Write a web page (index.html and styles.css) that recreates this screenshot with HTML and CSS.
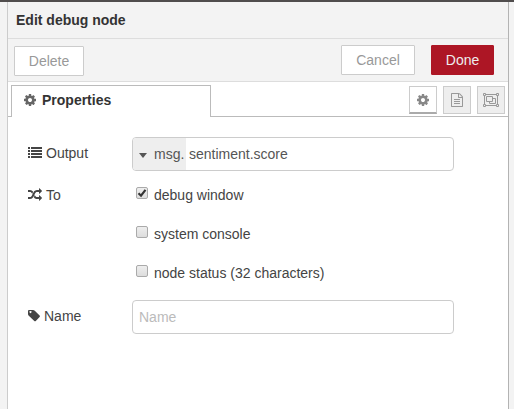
FILE: index.html
```html
<!DOCTYPE html>
<html lang="en">
<head>
<meta charset="utf-8">
<title>Edit debug node</title>
<link rel="stylesheet" href="styles.css">
</head>
<body>
<svg class="defs" aria-hidden="true">
  <symbol id="cog" viewBox="0 0 1792 1792"><path d="M1152 896q0-106-75-181t-181-75-181 75-75 181 75 181 181 75 181-75 75-181zm512-109v222q0 12-8 23t-20 13l-185 28q-19 54-39 91 35 50 107 138 10 12 10 25t-9 23q-27 37-99 108t-94 71q-12 0-26-9l-138-108q-44 23-91 38-16 136-29 186-7 28-36 28h-222q-14 0-24.500-8.500t-11.500-21.500l-28-184q-49-16-90-37l-141 107q-10 9-25 9-14 0-25-11-126-114-165-168-7-10-7-23 0-12 8-23 15-21 51-66.500t54-70.500q-27-50-41-99l-183-27q-13-2-21-12.500t-8-23.500v-222q0-12 8-23t19-13l186-28q14-46 39-92-40-57-107-138-10-12-10-24 0-10 9-23 26-36 98.500-107.500t94.500-71.500q13 0 26 10l138 107q44-23 91-38 16-136 29-186 7-28 36-28h222q14 0 24.500 8.500t11.500 21.500l28 184q49 16 90 37l142-107q9-9 24-9 13 0 25 10 129 119 165 170 7 8 7 22 0 12-8 23-15 21-51 66.500t-54 70.500q26 50 41 98l183 28q13 2 21 12.500t8 23.500z"/></symbol>
</svg>
<div class="tray">
  <header class="title">Edit debug node</header>
  <div class="toolbar">
    <button class="btn delete">Delete</button>
    <button class="btn cancel">Cancel</button>
    <button class="btn done">Done</button>
  </div>
  <nav class="tabs">
    <div class="tab"><svg class="icon"><use href="#cog"/></svg><span>Properties</span></div>
    <div class="tab-buttons">
      <div class="tool active"><svg class="icon"><use href="#cog"/></svg></div>
      <div class="tool"><svg class="icon" viewBox="0 0 1792 1792"><path d="M1596 380q28 28 48 76t20 88v1152q0 40-28 68t-68 28h-1344q-40 0-68-28t-28-68v-1600q0-40 28-68t68-28h896q40 0 88 20t76 48zm-444-244v376h376q-10-29-22-41l-313-313q-12-12-41-22zm384 1528v-1024h-416q-40 0-68-28t-28-68v-416h-768v1536h1280zm-1024-864q0-14 9-23t23-9h704q14 0 23 9t9 23v64q0 14-9 23t-23 9h-704q-14 0-23-9t-9-23v-64zm736 224q14 0 23 9t9 23v64q0 14-9 23t-23 9h-704q-14 0-23-9t-9-23v-64q0-14 9-23t23-9h704zm0 256q14 0 23 9t9 23v64q0 14-9 23t-23 9h-704q-14 0-23-9t-9-23v-64q0-14 9-23t23-9h704z"/></svg></div>
      <div class="tool"><svg class="icon group" viewBox="0 0 16 14"><path d="M1.500 3v8M14.500 3v8M3 1.500h10M3 12.500h10M.5.500h2v2h-2zM13.500.500h2v2h-2zM.5 11.500h2v2h-2zM13.500 11.500h2v2h-2zM3.500 3.500h6v5h-6zM9.500 5.500h3v5h-6v-2"/></svg></div>
    </div>
  </nav>
  <form class="form">
    <div class="row">
      <label class="label output"><svg class="icon" viewBox="0 0 14 14"><path d="M0 2h2v2H0zM0 5h2v2H0zM0 8h2v2H0zM0 11h2v2H0zM3 2h11v2H3zM3 5h11v2H3zM3 8h11v2H3zM3 11h11v2H3z"/></svg><span>Output</span></label>
      <div class="field typed"><span class="type"><i class="caret"></i>msg.</span><span class="value">sentiment.score</span></div>
    </div>
    <div class="row targets">
      <label class="label"><svg class="icon" viewBox="0 0 1792 1792"><path d="M666 481q-60 92-137 273-22-45-37-72.500t-40.500-63.500-51-56.500-63-35-81.500-14.500h-224q-14 0-23-9t-9-23v-192q0-14 9-23t23-9h224q250 0 410 225zm1126 799q0 14-9 23l-320 320q-9 9-23 9-13 0-22.500-9.500t-9.500-22.500v-192q-32 0-85 .5t-81 1-73-1-71-5-64-10.500-63-18.500-58-28.500-59-40-55-53.500-56-69.500q59-93 136-273 22 45 37 72.500t40.500 63.500 51 56.500 63 35 81.500 14.500h256v-192q0-14 9-23t23-9q12 0 24 10l319 319q9 9 9 23zm0-896q0 14-9 23l-320 320q-9 9-23 9-13 0-22.500-9.500t-9.500-22.500v-192h-256q-48 0-87 15t-69 45-51 61.500-45 77.500q-32 62-78 171-29 66-49.500 111t-54 105-64 100-74 83-90 68.500-106.500 42-128 16.500h-224q-14 0-23-9t-9-23v-192q0-14 9-23t23-9h224q48 0 87-15t69-45 51-61.500 45-77.500q32-62 78-171 29-66 49.500-111t54-105 64-100 74-83 90-68.500 106.500-42 128-16.500h256v-192q0-14 9-23t23-9q12 0 24 10l319 319q9 9 9 23z"/></svg><span>To</span></label>
      <div class="checks">
        <label class="check"><span class="box"><svg viewBox="0 0 10 10"><path d="M1.500 5.300L4 7.700L8.500 1.800"/></svg></span>debug window</label>
        <label class="check"><span class="box"></span>system console</label>
        <label class="check"><span class="box"></span>node status (32 characters)</label>
      </div>
    </div>
    <div class="row">
      <label class="label tag"><svg class="icon" viewBox="0 0 12 14"><path fill-rule="evenodd" d="M0 2Q0 1 1 1H5Q6 1 6.800 1.800L11.600 6.600Q12.300 7.300 11.600 8L7.800 12Q7 12.700 6.300 12L.8 6.700Q0 6 0 5zM2.500 2a1 1 0 1 0 .01 0z"/></svg><span>Name</span></label>
      <input class="field name" type="text" placeholder="Name">
    </div>
  </form>
</div>
</body>
</html>
```
FILE: styles.css
```css
* { box-sizing: border-box; }
body {
  margin: 0;
  height: 409px;
  overflow: hidden;
  padding: 0 5px 0 7px;
  border-top: 2px solid #504d4d;
  background: #f3f3f3;
  color: #444;
  font: 14px/20px "Liberation Sans", Arial, sans-serif;
}
.defs { display: none; }
.tray {
  height: 407px;
  background: #fff;
  border-left: 1px solid #ccc;
  border-right: 1px solid #b3b3b3;
}
.title {
  height: 37px;
  padding: 8px 8px 0;
  background: #f3f3f3;
  border-bottom: 1px solid #ddd;
  color: #333;
  font-weight: bold;
}
.toolbar {
  display: flex;
  align-items: flex-start;
  height: 43px;
  padding: 6px 14px 0 6px;
  background: #f3f3f3;
  border-bottom: 1px solid #ddd;
}
.btn {
  height: 30px;
  padding: 0;
  background: #fff;
  border: 1px solid #ccc;
  border-radius: 1px;
  color: #999;
  font: inherit;
}
.delete { width: 70px; margin: 1px auto 0 0; }
.cancel { width: 74px; margin-right: 16px; }
.done { width: 63px; background: #ad1625; border-color: #ad1625; color: #eee; }
.icon { display: block; flex: none; width: 14px; height: 14px; fill: currentColor; }
.tabs {
  display: flex;
  align-items: flex-end;
  justify-content: space-between;
  height: 35px;
  background: linear-gradient(#bbb, #bbb) bottom / 100% 1px no-repeat;
}
.tab {
  display: flex;
  align-items: center;
  gap: 5px;
  width: 200px;
  height: 32px;
  margin-left: 3px;
  padding: 0 0 3px 11px;
  background: #fff;
  border: 1px solid #bbb;
  border-bottom: 0;
  color: #333;
  font-weight: bold;
}
.tab .icon { color: #666; }
.tab-buttons { display: flex; gap: 6px; padding: 0 3px 3px 0; }
.tool {
  display: flex;
  align-items: center;
  justify-content: center;
  width: 28px;
  height: 28px;
  background: #eee;
  border: 1px solid #ccc;
  color: #999;
}
.tool.active { background: #fff; border-bottom: 2px solid #aaa; color: #888; }
.tool.active .icon { margin-top: 1px; }
.icon.group { width: 16px; fill: none; stroke: currentColor; }
.form { display: flex; flex-direction: column; padding: 20px 0 0 20px; }
.row { display: flex; }
.label { display: flex; gap: 4px; width: 104px; padding-top: 6px; }
.label .icon { margin-top: 3px; }
.label.output .icon { margin-top: 2px; }
.field {
  width: 322px;
  height: 34px;
  border: 1px solid #ccc;
  border-radius: 4px;
  background: #fff;
  color: #555;
  font: inherit;
  overflow: hidden;
}
.typed { display: flex; line-height: 32px; }
.type { display: flex; align-items: center; width: 53px; padding-left: 6px; background: #eee; }
.caret {
  margin: 3px 7px 0 0;
  border: 4px solid transparent;
  border-top: 5px solid #555;
  border-bottom: 0;
}
.value { padding-left: 3px; }
.targets { padding: 14px 0 17px; }
.targets .label { padding-top: 0; }
.checks { display: flex; flex-direction: column; gap: 19px; padding-left: 4px; }
.check { display: flex; gap: 6px; }
.box {
  width: 12px;
  height: 12px;
  margin-top: 2px;
  border: 1px solid #aaa;
  border-radius: 2px;
  background: linear-gradient(#eee, #ddd);
}
.box svg { display: block; width: 10px; height: 10px; fill: none; stroke: #333; stroke-width: 2.200; }
.name { padding: 0 6px; }
.name::placeholder { color: #bbb; }
.label.tag .icon { width: 12px; margin-top: 3px; }
```
